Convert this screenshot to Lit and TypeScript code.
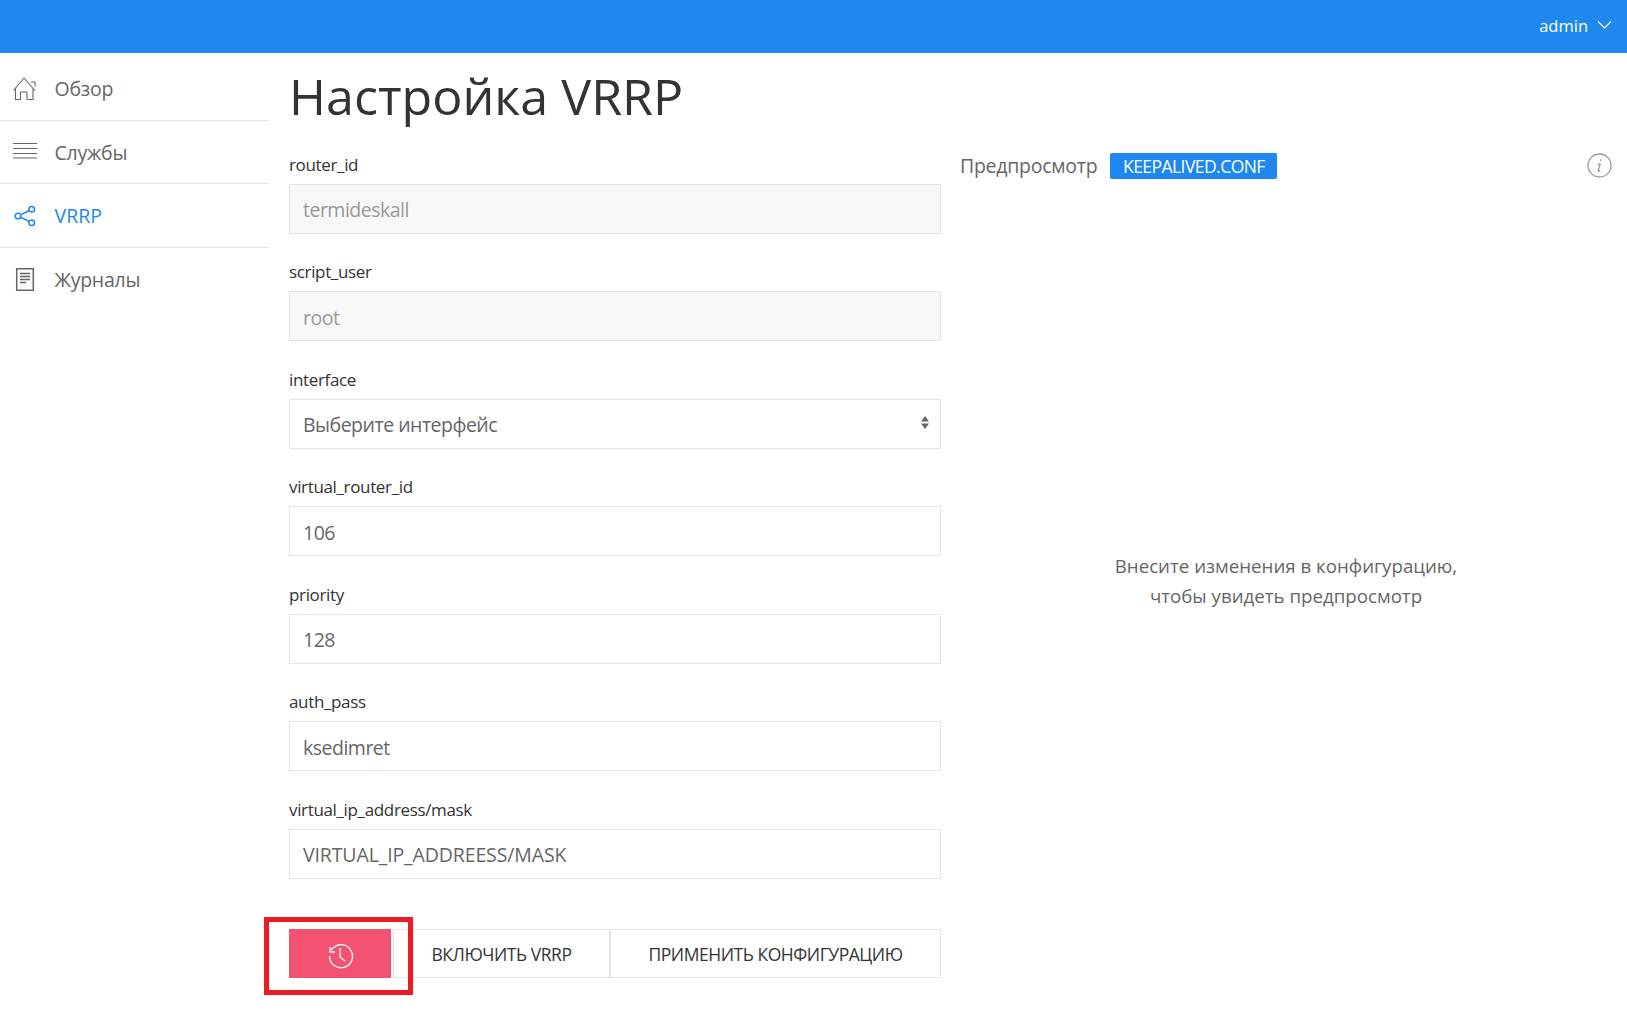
import { LitElement, html, css, svg } from "lit";
import { customElement } from "lit/decorators.js";
import { classMap } from "lit/directives/class-map.js";

const ICONS = {
  home: svg`<path d="M.5 13.5 11 1l11 12.5M18 5h4v4.5M2.5 11v11.5h5V15H14v7.5h6V11" />`,
  list: svg`<path d="M0 3.5h24M0 8.5h24M0 13.5h24M0 18h24" />`,
  share: svg`<g stroke-width="1.5"><circle cx="5" cy="12" r="2.8"/><circle cx="18.7" cy="5.3" r="2.8"/><circle cx="18.7" cy="18.7" r="2.8"/><path d="M7.6 10.8 16.2 6.5M7.6 13.2l8.6 4.3"/></g>`,
  doc: svg`<path stroke-width="1.5" d="M3.7 1.7h16.6v21.6H3.7zM7 6.5h10M7 9.5h10M7 12.5h10M7 15.5h6" />`,
};

interface Field { label: string; value: string; disabled?: boolean; caps?: boolean; }

const FIELDS_TOP: Field[] = [
  { label: "router_id", value: "termideskall", disabled: true },
  { label: "script_user", value: "root", disabled: true },
];
const FIELDS_BOTTOM: Field[] = [
  { label: "virtual_router_id", value: "106" },
  { label: "priority", value: "128" },
  { label: "auth_pass", value: "ksedimret" },
  { label: "virtual_ip_address/mask", value: "VIRTUAL_IP_ADDREESS/MASK", caps: true },
];

@customElement("app-root")
export class AppRoot extends LitElement {
  static styles = css`
    :host {
      display: block;
      height: 1010px;
      overflow: hidden;
      position: relative;
      background: #fff;
      font-family: "Open Sans", "Noto Sans", sans-serif;
      color: #666;
    }
    * { box-sizing: border-box; }
    .top {
      height: 53px;
      background: #1e87f0;
      color: #fff;
      display: flex;
      align-items: center;
      justify-content: flex-end;
      gap: 9px;
      padding: 0 15px 3px 0;
      font-size: 16.5px;
    }
    .top svg { width: 15px; height: 10px; fill: none; stroke: #fff; stroke-width: 1.1; }
    .body { display: flex; }
    .side { width: 269px; flex: none; padding-top: 4px; }
    .nav {
      display: flex;
      align-items: center;
      gap: 16.5px;
      padding-left: 13px;
      height: 64px;
      font-size: 19.5px;
      letter-spacing: -0.25px;
      color: #666;
      border-bottom: 1px solid #e5e5e5;
    }
    .nav:nth-child(2) { height: 63px; }
    .nav.last { border-bottom: none; height: 62px; }
    .nav.active { color: #1e87f0; letter-spacing: 0; }
    .nav svg { width: 25px; height: 24px; flex: none; fill: none; stroke: currentColor; stroke-width: 1.1; }
    .content { flex: 1; display: flex; flex-direction: column; padding: 0 15px 0 20px; }
    h1 {
      margin: 5px 0 0;
      font-size: 50.2px;
      line-height: 76px;
      font-weight: 400;
      color: #333;
    }
    .cols { display: flex; gap: 19px; margin-top: 5.75px; }
    .form { width: 652px; flex: none; }
    .field { height: 107.5px; padding-top: 13px; }
    label { display: block; font-size: 17px; letter-spacing: -0.35px; line-height: 24px; color: #333; margin-bottom: 7px; }
    input, select {
      display: block;
      width: 100%;
      height: 50px;
      padding: 2px 13px 0;
      border: 1px solid #e5e5e5;
      border-radius: 0;
      outline: none;
      font: inherit;
      font-size: 19.5px;
      letter-spacing: -0.5px;
      color: #666;
      background: #fff;
      appearance: none;
    }
    input.caps { letter-spacing: -0.12px; }
    input:disabled { background: #f8f8f8; color: #999; opacity: 1; }
    .select { position: relative; }
    .arrows { position: absolute; right: 12px; top: 16px; width: 8px; height: 15px; fill: #666; }
    .buttons { display: flex; gap: 2px; margin-top: 36.75px; }
    button {
      height: 49px;
      background: #fff;
      border: 1px solid #e5e5e5;
      font: inherit;
      font-size: 17.5px;
      letter-spacing: -0.45px;
      color: #333;
      padding: 0;
      display: flex;
      align-items: center;
      justify-content: center;
    }
    button.danger { width: 102px; background: #f45272; border: none; }
    button.danger svg { width: 28px; height: 28px; margin: 5px 0 0 2px; fill: none; stroke: #fff; stroke-width: 1.3; }
    button.enable { width: 217px; }
    button.apply { width: 331px; margin-left: -2px; }
    .preview { flex: 1; display: flex; flex-direction: column; }
    .phead { display: flex; align-items: center; height: 26px; margin-top: 12.75px; font-size: 19.5px; letter-spacing: -0.26px; }
    .badge {
      margin-left: 13px;
      height: 26px;
      width: 167px;
      background: #1e87f0;
      color: #fff;
      border-radius: 2px;
      font-size: 17.5px;
      letter-spacing: -0.55px;
      display: flex;
      align-items: center;
      justify-content: center;
    }
    .info { margin-left: auto; width: 25px; height: 25px; fill: none; stroke: #999; stroke-width: 1.3; }
    .hint { margin-top: 372px; text-align: center; font-size: 18.7px; line-height: 30px; color: #666; }
    .mark {
      position: absolute;
      left: 264px;
      top: 917px;
      width: 149px;
      height: 78px;
      border: 5px solid #ed1c24;
      pointer-events: none;
    }
  `;

  private field(f: Field) {
    return html`<div class="field">
      <label>${f.label}</label>
      <input class=${classMap({ caps: !!f.caps })} .value=${f.value} ?disabled=${f.disabled} />
    </div>`;
  }

  private nav(icon: keyof typeof ICONS, text: string, cls = "") {
    return html`<div class="nav ${cls}">
      <svg viewBox="0 0 25 24">${ICONS[icon]}</svg><span>${text}</span>
    </div>`;
  }

  render() {
    return html`
      <div class="top">
        <span>admin</span>
        <svg viewBox="0 0 15 10"><path d="M1 1.5 7.5 8 14 1.5" /></svg>
      </div>
      <div class="body">
        <nav class="side">
          ${this.nav("home", "Обзор")}
          ${this.nav("list", "Службы")}
          ${this.nav("share", "VRRP", "active")}
          ${this.nav("doc", "Журналы", "last")}
        </nav>
        <main class="content">
          <h1>Настройка VRRP</h1>
          <div class="cols">
            <div class="form">
              ${FIELDS_TOP.map((f) => this.field(f))}
              <div class="field">
                <label>interface</label>
                <div class="select">
                  <select><option>Выберите интерфейс</option></select>
                  <svg class="arrows" viewBox="0 0 8 15"><path d="M4 1 8 6.5H0zM4 14 0 8.5h8z" /></svg>
                </div>
              </div>
              ${FIELDS_BOTTOM.map((f) => this.field(f))}
              <div class="buttons">
                <button class="danger" aria-label="history">
                  <svg viewBox="0 0 28 28">
                    <path d="M4.2 8.2A11.5 11.5 0 1 1 2.5 14M3 5v5h5M13 6v9l5 4" />
                  </svg>
                </button>
                <button class="enable">ВКЛЮЧИТЬ VRRP</button>
                <button class="apply">ПРИМЕНИТЬ КОНФИГУРАЦИЮ</button>
              </div>
            </div>
            <section class="preview">
              <div class="phead">
                <span>Предпросмотр</span>
                <span class="badge">KEEPALIVED.CONF</span>
                <svg class="info" viewBox="0 0 25 25">
                  <circle cx="12.5" cy="12.5" r="11.5" />
                  <path d="M13.6 6.2v1.8M10.6 11.2h2.6l-2 6.3q-.3 1.4 2 .2" />
                </svg>
              </div>
              <div class="hint">Внесите изменения в конфигурацию,<br />чтобы увидеть предпросмотр</div>
            </section>
          </div>
        </main>
      </div>
      <div class="mark"></div>
    `;
  }
}
